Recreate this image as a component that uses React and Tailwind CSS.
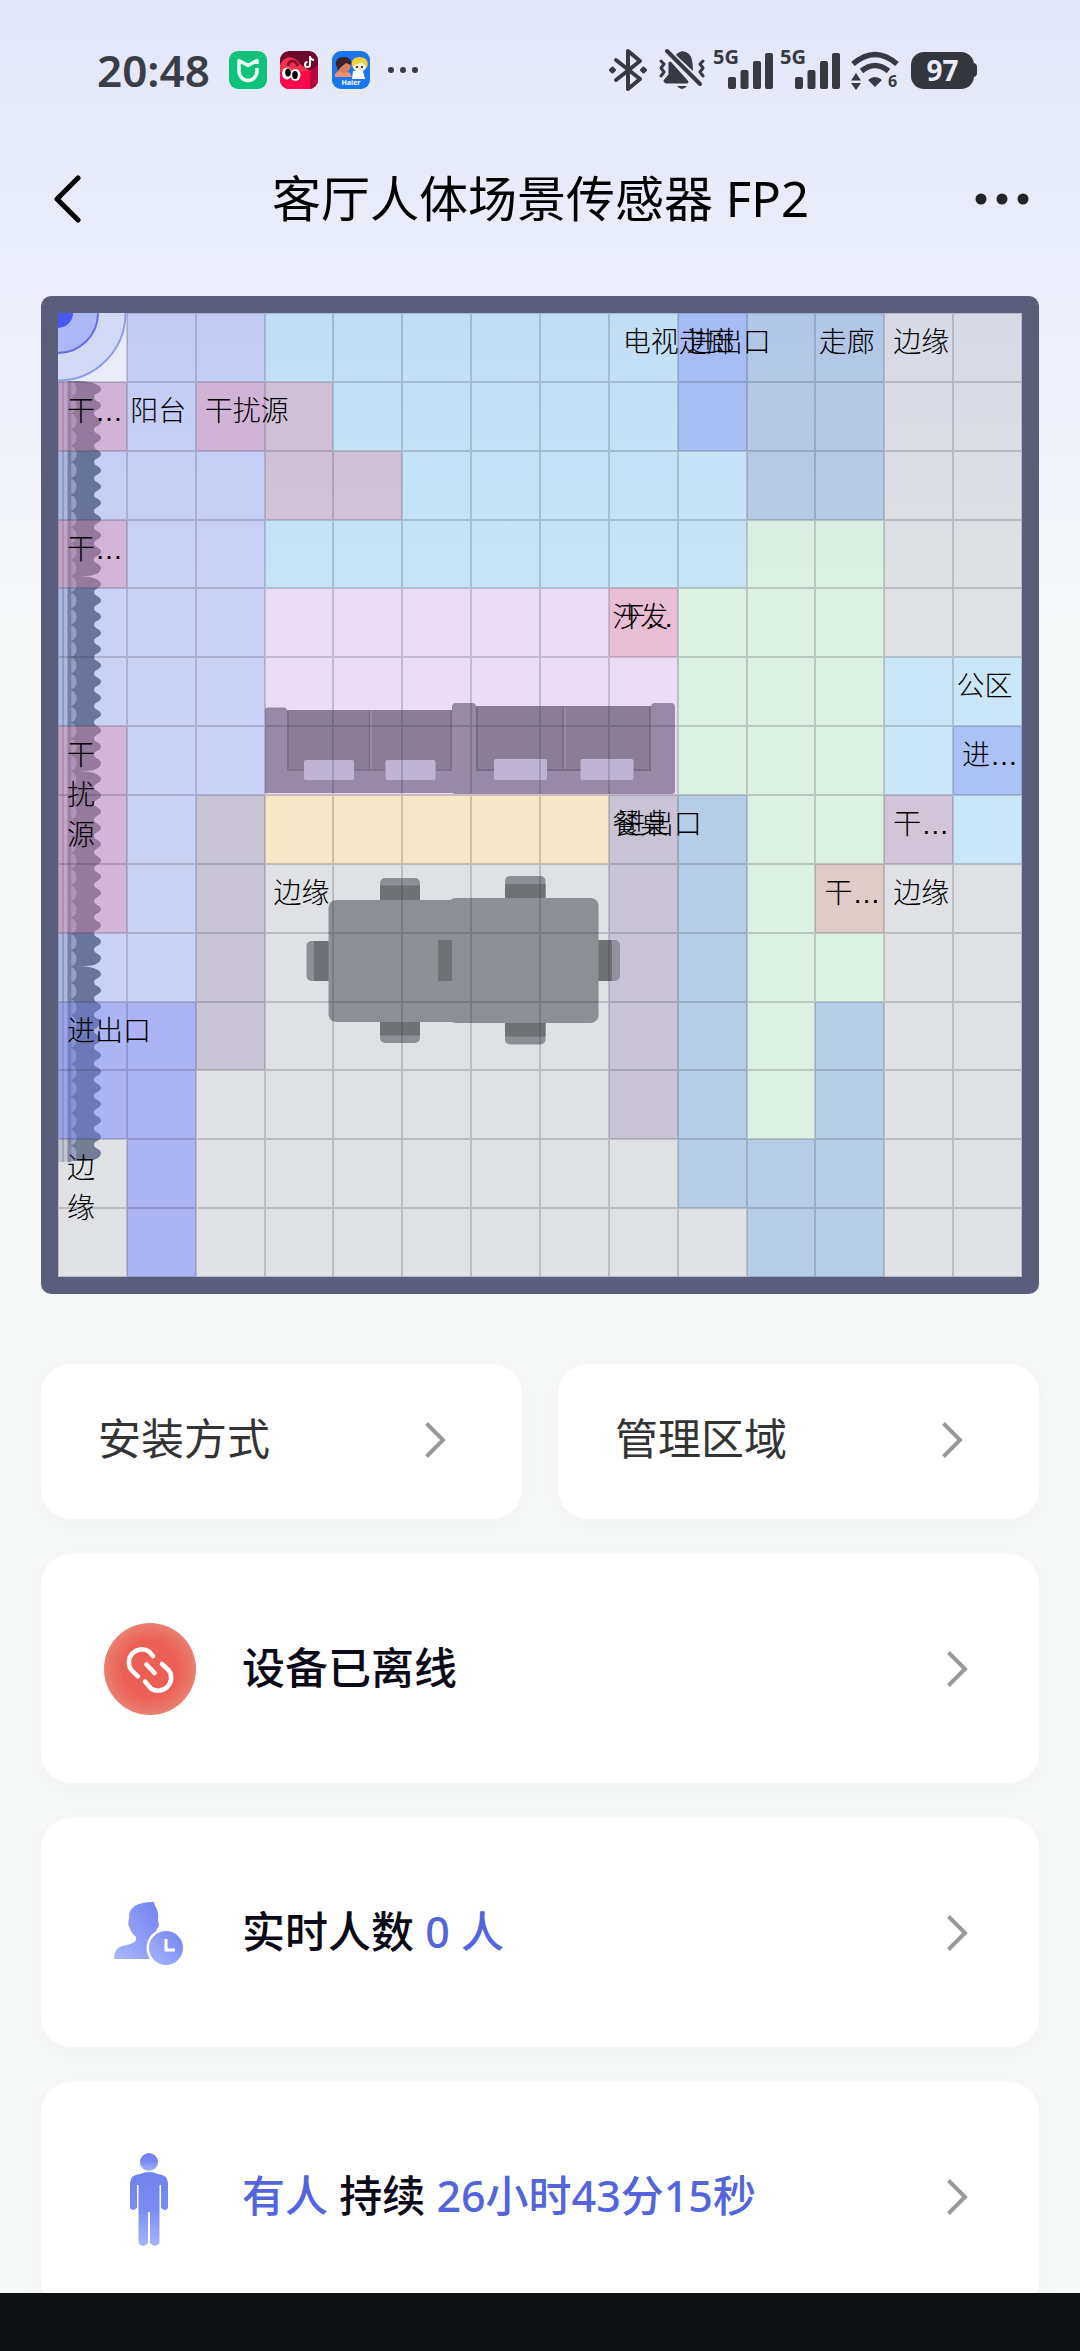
import React from "react";

const LAYOUT = [
  "WBBTTTTTTTCCgg",
  "BBBTTTTTTTCCgg",
  "BBBTTTTTTTCCgg",
  "BBBTTTTTTTGGgg",
  "BBBSSSSSSGGGgg",
  "BBBSSSSSSGGGLL",
  "BBBSSSSSSGGGLL",
  "BBPYYYYYPCGGLL",
  "BBPgggggPCGGgg",
  "BBPgggggPCGGgg",
  "BBPgggggPCGCgg",
  "BBggggggPCGCgg",
  "gBgggggggCCCgg",
  "gBggggggggCCgg",
];

const OVERLAY = [
  ".........E....",
  "I.II.....E....",
  "...II.........",
  "I.............",
  "........I.....",
  "..............",
  "I............E",
  "I...........I.",
  "I..........I..",
  "..............",
  "EE............",
  "EE............",
  ".E............",
  ".E............",
];

const ZONE = {
  W: "bg-[#f1f3f8]",
  B: "bg-[#c9d1f5]",
  T: "bg-[#c8e5f6]",
  C: "bg-[#b7cce5]",
  G: "bg-[#dcf1e1]",
  g: "bg-[#dfe1e4]",
  S: "bg-[#ebddf3]",
  Y: "bg-[#f6e7c8]",
  P: "bg-[#c8c4d6]",
  L: "bg-[#cae6f7]",
};

const TINT = {
  ".": "",
  E: "bg-[#757df4]/35",
  I: "bg-[#e5839c]/35",
};

const LABELS = [
  { col: 8.2, row: 0, text: "电视走廊" },
  { col: 9.13, row: 0, text: "进出口" },
  { col: 11.05, row: 0, text: "走廊" },
  { col: 12.13, row: 0, text: "边缘" },
  { col: 0.13, row: 1, text: "干…" },
  { col: 1.05, row: 1, text: "阳台" },
  { col: 2.13, row: 1, text: "干扰源" },
  { col: 0.13, row: 3, text: "干…" },
  { col: 8.05, row: 4, text: "沙发" },
  { col: 8.13, row: 4, text: "干…" },
  { col: 13.05, row: 5, text: "公区" },
  { col: 0.13, row: 6, text: "干扰源", vertical: true },
  { col: 13.13, row: 6, text: "进…" },
  { col: 8.05, row: 7, text: "餐桌" },
  { col: 8.13, row: 7, text: "进出口" },
  { col: 12.13, row: 7, text: "干…" },
  { col: 3.13, row: 8, text: "边缘" },
  { col: 11.13, row: 8, text: "干…" },
  { col: 12.13, row: 8, text: "边缘" },
  { col: 0.13, row: 10, text: "进出口" },
  { col: 0.13, row: 12, text: "边缘", vertical: true },
];

function curtainPanel(top) {
  const step = 195 / 12;
  let d = `M13 ${top}H20C34 ${top} 43 ${top + 4} 43 ${top + 8}`;
  for (let i = 0; i < 11; i++) {
    const y = top + step * (i + 1);
    d += `C43 ${y - 4} 36 ${y - 4} 36 ${y}S43 ${y + 4} 43 ${y + 8}`;
  }
  return d + `C43 ${top + 192} 36 ${top + 195} 28 ${top + 195}H13Z`;
}

function Furniture() {
  const panels = [68, 263, 458, 653];
  const folds = Array.from({ length: 48 }, (_, i) => 76 + i * 16.27);
  return (
    <svg viewBox="0 0 964 964" className="absolute inset-0 size-full" aria-hidden="true">
      <g>
        <rect x="0" y="68" width="13" height="781" fill="#2b3a6b" opacity=".16" />
        <path d="M5 68V849" stroke="#24305a" strokeWidth="2" opacity=".2" />
        <path d="M11.500 68V849" stroke="#24305a" strokeWidth="4" opacity=".4" />
        {panels.map((y) => (
          <path key={y} d={curtainPanel(y)} fill="#00103b" opacity=".48" />
        ))}
        {folds.map((y) => (
          <path key={y} d={`M13 ${y - 8}Q18.500 ${y - 6} 18.500 ${y}Q18.500 ${y + 6} 13 ${y + 8}Z`} fill="#b5c0ea" opacity=".55" />
        ))}
      </g>
      <g>
        <rect x="207" y="397" width="195" height="83" fill="#8c7d97" />
        <path d="M210 394.500H226a3 3 0 0 1 3 3V456H395V480H210a3 3 0 0 1-3-3V397.500a3 3 0 0 1 3-3Z" fill="#988aa5" />
        <path d="M230 398V457H393V398" fill="none" stroke="#7a6b87" strokeWidth="1.500" />
        <path d="M311.500 398V457" stroke="#7a6b87" strokeWidth="1.500" />
        <path d="M313 398V456" stroke="#a598b0" />
        <rect x="246" y="447" width="50" height="20" rx="2" fill="#bfb5d2" />
        <rect x="327.500" y="447" width="50" height="20" rx="2" fill="#bfb5d2" />
        <rect x="412" y="393" width="190" height="88" fill="#8c7d97" />
        <path d="M398 390h16a4 4 0 0 1 4 4V457H593V394a4 4 0 0 1 4-4H613a4 4 0 0 1 4 4V478a3 3 0 0 1-3 3H398a4 4 0 0 1-4-4V394a4 4 0 0 1 4-4Z" fill="#988aa5" />
        <path d="M419 394V457H592V394" fill="none" stroke="#7a6b87" strokeWidth="2" />
        <path d="M505 394V457" stroke="#7a6b87" strokeWidth="1.500" />
        <path d="M507 394V456" stroke="#a598b0" />
        <rect x="436" y="446" width="53" height="21" rx="2" fill="#bfb5d2" />
        <rect x="522.500" y="446" width="53" height="21" rx="2" fill="#bfb5d2" />
      </g>
      <g fill="#8c8f95">
        <rect x="322" y="565" width="40" height="165" rx="5" />
        <rect x="447" y="563" width="40.500" height="168.500" rx="5" />
        <rect x="248.500" y="628" width="60" height="40" rx="5" />
        <rect x="500" y="627" width="62" height="41" rx="5" fill="#948fa0" />
        <g fill="#6f7175">
          <rect x="322" y="572.500" width="40" height="150" />
          <rect x="447" y="571" width="40.500" height="152.500" />
          <rect x="256" y="628" width="40" height="40" />
          <rect x="530" y="627" width="24" height="41" />
        </g>
        <rect x="270.500" y="587" width="200" height="122" rx="8" />
        <rect x="390" y="585" width="150.500" height="125" rx="8" />
        <rect x="380" y="627" width="14" height="41" fill="#6f7175" />
      </g>
    </svg>
  );
}

function Radar() {
  return (
    <svg viewBox="0 0 964 964" className="absolute inset-0 size-full" aria-hidden="true">
      <path d="M0 0H67.500A67.500 67.500 0 0 1 0 67.500Z" fill="#d3daf6" />
      <path d="M67.500 0A67.500 67.500 0 0 1 0 67.500" fill="none" stroke="#8f9de8" strokeWidth="2" />
      <path d="M0 0H40A40 40 0 0 1 0 40Z" fill="#aeb8f6" />
      <path d="M40 0A40 40 0 0 1 0 40" fill="none" stroke="#6470e2" strokeWidth="2" />
      <path d="M0 0H15A15 15 0 0 1 0 15Z" fill="#4a58f2" />
    </svg>
  );
}

function FloorPlan() {
  return (
    <section aria-label="平面图" className="rounded-[10px] bg-[#5b5e7b] p-[17px]">
      <div className="relative aspect-square overflow-hidden">
        <div className="grid size-full grid-cols-14 grid-rows-14">
          {LAYOUT.join("").split("").map((z, i) => (
            <div key={i} className={ZONE[z]} />
          ))}
        </div>
        <div className="absolute inset-0 bg-linear-to-b from-[#6f7fff]/7 to-transparent to-30%" />
        <Furniture />
        <div className="absolute inset-0 grid grid-cols-14 grid-rows-14">
          {OVERLAY.join("").split("").map((z, i) => (
            <div key={i} className={`border border-[#2d2d41]/20 ${TINT[z]}`} />
          ))}
        </div>
        <Radar />
        {LABELS.map((l, i) => (
          <span
            key={i}
            className={`absolute pt-[10px] font-['Liberation_Sans','Noto_Sans_CJK_SC',sans-serif] text-[28px] leading-10 font-light text-black ${l.vertical ? "w-7 break-all" : "whitespace-nowrap"}`}
            style={{ left: `${(l.col / 14) * 100}%`, top: `${(l.row / 14) * 100}%` }}
          >
            {l.text}
          </span>
        ))}
      </div>
    </section>
  );
}

function SignalBars() {
  return (
    <div className="relative h-[42px] w-[60px]">
      <span className="absolute top-0 left-0 text-[20px] leading-4 font-bold">5G</span>
      <svg viewBox="0 0 60 42" className="size-full" fill="currentColor" aria-hidden="true">
        <rect x="15" y="28" width="8" height="12" rx="2" />
        <rect x="27.500" y="21" width="8" height="19" rx="2" />
        <rect x="40" y="12" width="8" height="28" rx="2" />
        <rect x="52" y="4" width="8" height="36" rx="2" />
      </svg>
    </div>
  );
}

function StatusBar() {
  return (
    <div className="flex h-[140px] items-center justify-between pr-[106px] pl-[97px] text-[#3a3d46]">
      <div className="flex items-center">
        <span className="w-[132px] text-[44px] leading-[50px] font-semibold whitespace-nowrap">20:48</span>
        <svg viewBox="0 0 38 38" className="size-[38px]" aria-label="米家">
          <rect width="38" height="38" rx="9" fill="#0fc27c" />
          <path d="M10 18V9.500L19 14.500L28 9.500V13" fill="none" stroke="#e9fff6" strokeWidth="3.500" strokeLinejoin="round" />
          <path d="M10 16V20A9 9.500 0 0 0 28 20V17" fill="none" stroke="#e9fff6" strokeWidth="3.500" />
        </svg>
        <svg viewBox="0 0 38 38" className="ml-[13px] size-[38px]" aria-label="抖音商城">
          <defs>
            <clipPath id="mall"><rect width="38" height="38" rx="9" /></clipPath>
          </defs>
          <g clipPath="url(#mall)">
            <rect width="38" height="38" fill="#6d0a2b" />
            <path d="M0 14L30 20V38H0Z" fill="#fb0a4e" />
            <path d="M30 20L38 14V38H30Z" fill="#b8063c" />
            <path d="M0 14C5 4 14 4 20 13L30 20L0 21Z" fill="#f8314f" />
            <path d="M8 15C9 8 16 9 18 15" fill="none" stroke="#8d0d2f" strokeWidth="3" />
            <path d="M30 5v8.500a2.500 2.500 0 1 1-2.500-2.500M30 6q1 3 4 3" fill="none" stroke="#fff" strokeWidth="2" />
            <ellipse cx="7" cy="22.500" rx="5" ry="6" fill="#fff" />
            <ellipse cx="15.500" cy="24" rx="5" ry="6" fill="#fff" />
            <ellipse cx="8" cy="21.500" rx="2.800" ry="4" />
            <ellipse cx="15" cy="24" rx="2.800" ry="4" />
          </g>
        </svg>
        <svg viewBox="0 0 38 38" className="ml-[14px] size-[38px]" aria-label="海尔">
          <rect width="38" height="38" rx="9" fill="#1976ee" />
          <path d="M3 23Q8 17 12 20L18 22L20 26H3Z" fill="#f0916d" />
          <circle cx="11.500" cy="15" r="7" fill="#d98062" />
          <path d="M4 14Q3 6 12 6Q20 6 19 14L14 12L8 17L6 20Z" fill="#41202c" />
          <circle cx="27.500" cy="14" r="7" fill="#fff0e2" />
          <path d="M20 16Q18 6 28 6Q38 7 35 17L30 11L23 14Z" fill="#f6cf37" />
          <path d="M21 20h10l2 8H20Z" fill="#fff" />
          <circle cx="25" cy="16" r="1" /><circle cx="30" cy="16" r="1" />
          <text x="19" y="34" textAnchor="middle" fontSize="7" fontWeight="700" fill="#fff">Haier</text>
        </svg>
        <svg viewBox="0 0 32 8" className="ml-[17px] h-2 w-8" fill="currentColor" aria-hidden="true">
          <circle cx="4" cy="4" r="3" /><circle cx="16" cy="4" r="3" /><circle cx="28" cy="4" r="3" />
        </svg>
      </div>
      <div className="flex items-center text-[#373a42]">
        <svg viewBox="0 0 38 44" className="h-11 w-[38px]" fill="none" stroke="currentColor" strokeWidth="4" strokeLinejoin="round" strokeLinecap="round" aria-label="蓝牙">
          <path d="M7 12L31 31L19 41V3L31 13L7 32" />
          <path d="M3.500 20l2 2-2 2-2-2Z M34.500 20l2 2-2 2-2-2Z" strokeWidth="3" fill="currentColor" />
        </svg>
        <svg viewBox="0 0 46 44" className="ml-3 h-11 w-[46px]" fill="none" stroke="currentColor" strokeWidth="3" strokeLinecap="round" strokeLinejoin="round" aria-label="静音">
          <path d="M6 33L11 27V15L28 34H7Z" fill="currentColor" />
          <path d="M17 7Q23 0 30 6Q34 10 34 23Z" fill="currentColor" stroke="none" />
          <path d="M18 38H28Q23 44 18 38Z" fill="currentColor" stroke="none" />
          <path d="M8 3L41 36" strokeWidth="4" />
          <path d="M2 13l3 3-3 4 3 4-3 4M44 13l-3 3 3 4-3 4 3 4" />
        </svg>
        <div className="ml-2"><SignalBars /></div>
        <div className="ml-[7px]"><SignalBars /></div>
        <svg viewBox="0 0 48 42" className="ml-[11px] h-[42px] w-12 overflow-visible" fill="none" stroke="currentColor" strokeWidth="5.500" aria-label="Wi-Fi 6">
          <path d="M2 15Q24 -4 46 15" />
          <path d="M10.500 22Q24 11 37.500 22" />
          <path d="M17 31Q24 25 31 31L24 38Z" fill="currentColor" stroke="none" />
          <path d="M5 24L10 31.500H0ZM5 41L10 34H0Z" fill="currentColor" stroke="none" />
          <text x="37" y="38" fontSize="16" fontWeight="700" fill="currentColor" stroke="none">6</text>
        </svg>
        <div className="relative ml-3 flex h-[37px] w-[63px] items-center justify-center rounded-[13px] bg-[#33363c] text-[28px] font-bold text-[#e9ecf8]">
          97
          <span className="absolute top-[11px] -right-[3px] h-[14px] w-[4px] rounded-r bg-[#33363c]" />
        </div>
      </div>
    </div>
  );
}

function Chevron() {
  return (
    <svg viewBox="0 0 22 38" className="h-[38px] w-[22px] shrink-0" fill="none" stroke="#999" strokeWidth="4" aria-hidden="true">
      <path d="M2.500 2.500L19 19L2.500 35.500" />
    </svg>
  );
}

function OfflineIcon() {
  return (
    <svg viewBox="0 0 92 92" className="size-[92px]" aria-hidden="true">
      <defs>
        <radialGradient id="red" cx=".5" cy=".5" r=".5">
          <stop offset=".6" stopColor="#ec5f55" /><stop offset="1" stopColor="#ea7f70" />
        </radialGradient>
      </defs>
      <circle cx="46" cy="46" r="46" fill="url(#red)" />
      <g fill="none" stroke="#fff" strokeWidth="4.500" strokeLinecap="round">
        <path d="M49 33L45 28.500A13 13 0 0 0 27 46.500L34 53.500" />
        <path d="M58 41L65 47.500A13 13 0 0 1 47 65.500L41 58.500" />
        <path d="M42.500 41.500L50.500 50" />
      </g>
    </svg>
  );
}

function PeopleIcon() {
  return (
    <svg viewBox="0 0 72 64" className="h-16 w-[72px]" aria-hidden="true">
      <defs>
        <linearGradient id="blue" x1="1" y1="0" x2="0" y2="1">
          <stop stopColor="#7182f2" /><stop offset="1" stopColor="#a9b8fb" />
        </linearGradient>
      </defs>
      <path d="M15 17Q14 1 40 1L41 5Q45 9 44 20Q46 26 43 28Q42 33 37 38Q35 57 36 58H0Q0 47 8 45Q20 43 22 39V36Q16 31 16 27Q13 24 15 17Z" fill="url(#blue)" />
      <circle cx="52" cy="47" r="19.500" fill="#fff" />
      <circle cx="52" cy="47" r="17" fill="url(#blue)" />
      <path d="M52 38V49H61" fill="none" stroke="#fff" strokeWidth="3" />
    </svg>
  );
}

function PersonIcon() {
  return (
    <svg viewBox="0 -6 40 100" className="h-[100px] w-10" aria-hidden="true">
      <defs>
        <linearGradient id="body" x1=".5" y1="0" x2=".5" y2="1">
          <stop stopColor="#6f82ee" /><stop offset=".5" stopColor="#7a8cf3" /><stop offset="1" stopColor="#a6b5fa" />
        </linearGradient>
      </defs>
      <circle cx="19" cy="9" r="9" fill="url(#body)" />
      <path d="M10 21Q19 17 28 21Q38 22 38 30V55Q35.500 59 31 55V32H29.500V90Q25 96 20 90V59H18V90Q13 96 8.500 90V32H7V55Q2.500 59 0 55V30Q0 22 10 21Z" fill="url(#body)" />
    </svg>
  );
}

function Tile({ label }) {
  return (
    <button className="flex h-[155px] flex-1 items-center justify-between rounded-[30px] bg-white pr-[76px] pb-1 pl-[57px] text-[43px] text-[#333] shadow-[0_4px_24px_rgba(0,0,0,0.03)]">
      {label}
      <Chevron />
    </button>
  );
}

function Row({ icon, children }) {
  return (
    <button className="flex h-[229px] w-full shrink-0 items-center rounded-[30px] bg-white pr-[71px] pl-[58px] text-left text-[43px] font-medium text-[#0c0a18] shadow-[0_4px_24px_rgba(0,0,0,0.03)]">
      <span className="flex w-[101px] shrink-0 justify-center">{icon}</span>
      <span className="ml-[42px] flex-1 whitespace-pre">{children}</span>
      <Chevron />
    </button>
  );
}

export default function App() {
  return (
    <div
      lang="zh-CN"
      className="flex h-screen flex-col overflow-hidden bg-[#f7f9f9] bg-linear-to-b from-[#e2e6f7] via-[#edf0fb] via-15% to-[#f7f9f9] to-27% font-['Noto_Sans','Noto_Sans_CJK_SC',sans-serif]"
    >
      <StatusBar />
      <header className="flex h-[116px] shrink-0 items-center justify-between pt-[2px] pr-[50px] pl-[53px] text-black">
        <button aria-label="返回">
          <svg viewBox="0 0 30 48" className="h-12 w-[30px]" fill="none" stroke="currentColor" strokeWidth="5" strokeLinecap="round" strokeLinejoin="round">
            <path d="M25 3L4 24L25 45" />
          </svg>
        </button>
        <h1 className="pl-6 text-[49px]">客厅人体场景传感器 FP2</h1>
        <button aria-label="更多">
          <svg viewBox="0 0 56 12" className="h-3 w-14" fill="#222528">
            <circle cx="7" cy="6" r="5.500" /><circle cx="28" cy="6" r="5.500" /><circle cx="49" cy="6" r="5.500" />
          </svg>
        </button>
      </header>
      <main className="flex min-h-0 flex-1 flex-col overflow-hidden px-[41px] pt-10">
        <FloorPlan />
        <div className="mt-[70px] flex gap-9">
          <Tile label="安装方式" />
          <Tile label="管理区域" />
        </div>
        <div className="mt-[35px] flex flex-col gap-[35px]">
          <Row icon={<OfflineIcon />}>设备已离线</Row>
          <Row icon={<PeopleIcon />}>
            实时人数 <span className="text-[#5364dc]">0 人</span>
          </Row>
          <Row icon={<PersonIcon />}>
            <span className="text-[#5364dc]">有人</span> 持续 <span className="text-[#5364dc]">26小时43分15秒</span>
          </Row>
        </div>
      </main>
      <div className="h-[58px] shrink-0 bg-[#0f1011]" />
    </div>
  );
}
